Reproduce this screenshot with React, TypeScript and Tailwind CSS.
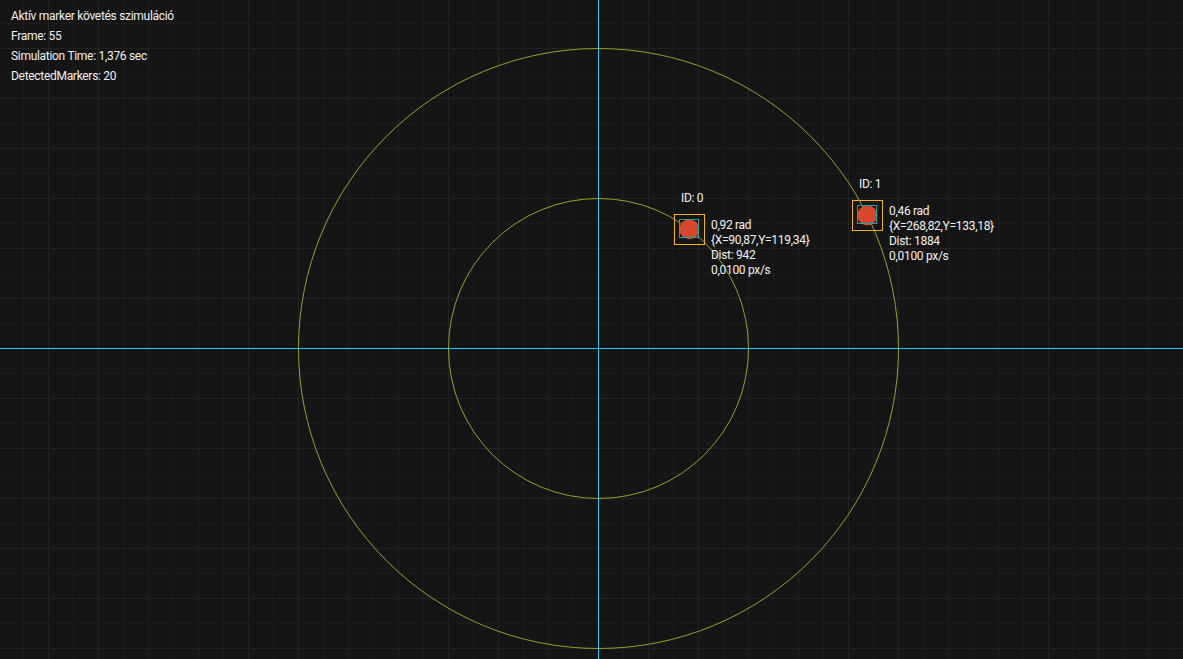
import React from 'react'

const W = 1183
const H = 659
const CX = 598
const CY = 348

type Marker = {
  id: number
  x: number
  y: number
  angle: string
  pos: string
  dist: number
}

const markers: Marker[] = [
  { id: 0, x: 90.87, y: 119.34, angle: '0,92 rad', pos: '{X=90,87,Y=119,34}', dist: 942 },
  { id: 1, x: 268.82, y: 133.18, angle: '0,46 rad', pos: '{X=268,82,Y=133,18}', dist: 1884 },
]

function Grid() {
  const lines: React.ReactNode[] = []
  for (let k = -30; k <= 30; k++) {
    const x = CX + k * 25
    if (x >= 0 && x <= W) {
      lines.push(
        <line key={'v' + k} x1={x + 0.5} y1={0} x2={x + 0.5} y2={H}
          stroke={k % 2 === 0 ? '#222222' : '#1c1c1c'} strokeWidth={1} />
      )
    }
    const y = CY + k * 25
    if (y >= 0 && y <= H) {
      lines.push(
        <line key={'h' + k} x1={0} y1={y + 0.5} x2={W} y2={y + 0.5}
          stroke={k % 2 === 0 ? '#222222' : '#1c1c1c'} strokeWidth={1} />
      )
    }
  }
  return <g>{lines}</g>
}

function MarkerLabel({ m }: { m: Marker }) {
  const mx = Math.round(CX + m.x)
  const my = Math.round(CY - m.y)
  return (
    <div className="absolute tracking-[-0.3px]" style={{ left: mx - 15, top: my - 38 }}>
      <div className="text-[12px] leading-[15px] text-[#f2f2f2] pl-[7px]">ID: {m.id}</div>
      <div className="flex mt-[8px]">
        <div className="w-[31px] h-[31px] shrink-0" />
        <div className="flex flex-col pl-[6px] pt-[4px] text-[12px] leading-[15px] text-[#f2f2f2] whitespace-nowrap">
          <span>{m.angle}</span>
          <span>{m.pos}</span>
          <span>Dist: {m.dist}</span>
          <span>0,0100 px/s</span>
        </div>
      </div>
    </div>
  )
}

export default function App() {
  return (
    <div
      className="relative w-[1183px] h-[659px] overflow-hidden bg-[#151515]"
      style={{ fontFamily: 'Roboto, "Liberation Sans", sans-serif' }}
    >
      {/* canvas drawing */}
      <svg className="absolute inset-0" width={W} height={H} viewBox={`0 0 ${W} ${H}`}>
        <Grid />
        <circle cx={CX + 0.5} cy={CY + 0.5} r={150} fill="none" stroke="#8ca81e" strokeWidth={1} />
        <circle cx={CX + 0.5} cy={CY + 0.5} r={300} fill="none" stroke="#8ca81e" strokeWidth={1} />
        <line x1={CX + 0.5} y1={0} x2={CX + 0.5} y2={H} stroke="#2ec6f4" strokeWidth={1} />
        <line x1={0} y1={CY + 0.5} x2={W} y2={CY + 0.5} stroke="#2ec6f4" strokeWidth={1} />
        {markers.map(m => {
          const mx = CX + m.x
          const my = CY - m.y
          return (
            <g key={m.id}>
              <rect x={Math.round(mx) - 14.5} y={Math.round(my) - 14.5} width={30} height={30}
                fill="none" stroke="#f2b41a" strokeWidth={1} />
              <circle cx={mx + 0.5} cy={my + 0.5} r={10} fill="#d7472c" />
              <rect x={Math.round(mx) - 9.5} y={Math.round(my) - 9.5} width={19} height={18}
                fill="none" stroke="#1ea3a6" strokeWidth={1} />
            </g>
          )
        })}
      </svg>

      {/* info overlay */}
      <div className="absolute left-[11px] top-[6px] flex flex-col text-[12px] leading-[20px] tracking-[-0.3px] text-[#f0f0f0]">
        <span>Aktív marker követés szimuláció</span>
        <span>Frame: 55</span>
        <span>Simulation Time: 1,376 sec</span>
        <span>DetectedMarkers: 20</span>
      </div>

      {markers.map(m => <MarkerLabel key={m.id} m={m} />)}
    </div>
  )
}
